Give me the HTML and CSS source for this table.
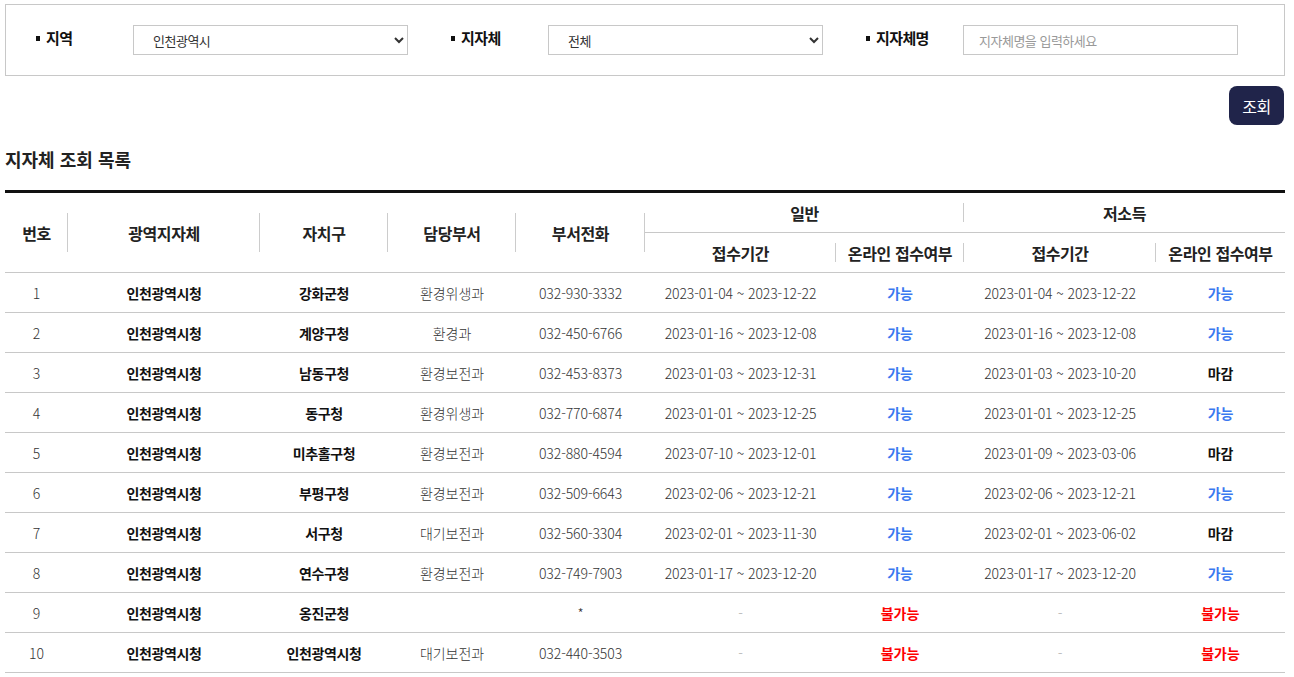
FILE: index.html
```html
<!DOCTYPE html>
<html lang="ko">
<head>
<meta charset="utf-8">
<title>지자체 조회 목록</title>
<link rel="stylesheet" href="styles.css">
</head>
<body>
<div class="wrap">
  <div class="search-box">
    <div class="field">
      <span class="label">지역</span>
      <select class="control"><option>인천광역시</option></select>
    </div>
    <div class="field">
      <span class="label">지자체</span>
      <select class="control"><option>전체</option></select>
    </div>
    <div class="field">
      <span class="label">지자체명</span>
      <input class="control" type="text" placeholder="지자체명을 입력하세요">
    </div>
  </div>
  <div class="btn-row"><button class="btn">조회</button></div>
  <h2 class="title">지자체 조회 목록</h2>
  <table class="list">
    <colgroup>
      <col style="width:63px"><col style="width:192px"><col style="width:128px"><col style="width:128px"><col style="width:129px">
      <col style="width:191px"><col style="width:128px"><col style="width:192px"><col style="width:129px">
    </colgroup>
    <thead>
      <tr>
        <th rowspan="2" class="tall">번호</th>
        <th rowspan="2" class="tall sep">광역지자체</th>
        <th rowspan="2" class="tall sep">자치구</th>
        <th rowspan="2" class="tall sep">담당부서</th>
        <th rowspan="2" class="tall sep sep-r">부서전화</th>
        <th colspan="2" class="group">일반</th>
        <th colspan="2" class="group sep">저소득</th>
      </tr>
      <tr>
        <th>접수기간</th>
        <th class="sep">온라인 접수여부</th>
        <th class="sep">접수기간</th>
        <th class="sep">온라인 접수여부</th>
      </tr>
    </thead>
    <tbody>
      <tr><td>1</td><td class="b">인천광역시청</td><td class="b">강화군청</td><td>환경위생과</td><td>032-930-3332</td><td>2023-01-04 ~ 2023-12-22</td><td class="ok">가능</td><td>2023-01-04 ~ 2023-12-22</td><td class="ok">가능</td></tr>
      <tr><td>2</td><td class="b">인천광역시청</td><td class="b">계양구청</td><td>환경과</td><td>032-450-6766</td><td>2023-01-16 ~ 2023-12-08</td><td class="ok">가능</td><td>2023-01-16 ~ 2023-12-08</td><td class="ok">가능</td></tr>
      <tr><td>3</td><td class="b">인천광역시청</td><td class="b">남동구청</td><td>환경보전과</td><td>032-453-8373</td><td>2023-01-03 ~ 2023-12-31</td><td class="ok">가능</td><td>2023-01-03 ~ 2023-10-20</td><td class="closed">마감</td></tr>
      <tr><td>4</td><td class="b">인천광역시청</td><td class="b">동구청</td><td>환경위생과</td><td>032-770-6874</td><td>2023-01-01 ~ 2023-12-25</td><td class="ok">가능</td><td>2023-01-01 ~ 2023-12-25</td><td class="ok">가능</td></tr>
      <tr><td>5</td><td class="b">인천광역시청</td><td class="b">미추홀구청</td><td>환경보전과</td><td>032-880-4594</td><td>2023-07-10 ~ 2023-12-01</td><td class="ok">가능</td><td>2023-01-09 ~ 2023-03-06</td><td class="closed">마감</td></tr>
      <tr><td>6</td><td class="b">인천광역시청</td><td class="b">부평구청</td><td>환경보전과</td><td>032-509-6643</td><td>2023-02-06 ~ 2023-12-21</td><td class="ok">가능</td><td>2023-02-06 ~ 2023-12-21</td><td class="ok">가능</td></tr>
      <tr><td>7</td><td class="b">인천광역시청</td><td class="b">서구청</td><td>대기보전과</td><td>032-560-3304</td><td>2023-02-01 ~ 2023-11-30</td><td class="ok">가능</td><td>2023-02-01 ~ 2023-06-02</td><td class="closed">마감</td></tr>
      <tr><td>8</td><td class="b">인천광역시청</td><td class="b">연수구청</td><td>환경보전과</td><td>032-749-7903</td><td>2023-01-17 ~ 2023-12-20</td><td class="ok">가능</td><td>2023-01-17 ~ 2023-12-20</td><td class="ok">가능</td></tr>
      <tr><td>9</td><td class="b">인천광역시청</td><td class="b">옹진군청</td><td></td><td>*</td><td class="dash">-</td><td class="no">불가능</td><td class="dash">-</td><td class="no">불가능</td></tr>
      <tr><td>10</td><td class="b">인천광역시청</td><td class="b">인천광역시청</td><td>대기보전과</td><td>032-440-3503</td><td class="dash">-</td><td class="no">불가능</td><td class="dash">-</td><td class="no">불가능</td></tr>
    </tbody>
  </table>
</div>
</body>
</html>
```

FILE: styles.css
```css
* { box-sizing: border-box; }
html, body { margin: 0; padding: 0; background: #fff; }
body {
  font-family: "Noto Sans CJK KR", "Noto Sans", sans-serif;
  color: #222;
}
.wrap {
  width: 1280px;
  margin: 4px 0 0 5px;
}
.search-box {
  border: 1px solid #c8c8c8;
  height: 72px;
  padding: 20px 0 0 30px;
  display: flex;
  gap: 43px;
}
.field {
  display: flex;
  align-items: flex-start;
}
.label {
  width: 97px;
  display: flex;
  align-items: center;
  gap: 6px;
  font-size: 15px;
  font-weight: 700;
  letter-spacing: -0.6px;
  line-height: 26px;
  color: #111;
}
.label::before {
  content: "";
  width: 4px;
  height: 5px;
  background: #111;
}
.control {
  width: 275px;
  height: 30px;
  border: 1px solid #c8c8c8;
  border-radius: 0;
  background: #fff;
  font-family: "Noto Sans CJK KR", sans-serif;
  font-size: 13px;
  letter-spacing: -0.5px;
  color: #333;
  padding: 0 10px 0 15px;
  outline: none;
}
.control::placeholder { color: #999; }
.btn-row {
  display: flex;
  justify-content: flex-end;
  margin-top: 10px;
  padding-right: 1px;
}
.btn {
  width: 55px;
  height: 39px;
  border: none;
  border-radius: 8px;
  background: #20244a;
  color: #fff;
  font-family: "Noto Sans CJK KR", sans-serif;
  font-size: 16px;
  letter-spacing: -0.5px;
  padding: 0;
}
.title {
  margin: 21px 0 18px;
  font-size: 18px;
  font-weight: 700;
  letter-spacing: 0;
  line-height: 26px;
  color: #222;
}
.list {
  width: 1280px;
  border-collapse: collapse;
  table-layout: fixed;
  border-top: 3px solid #111;
}
.list th {
  position: relative;
  height: 40px;
  font-size: 16px;
  font-weight: 700;
  letter-spacing: -0.4px;
  color: #222;
  text-align: center;
  padding: 0;
  border-bottom: 1px solid #c8c8c8;
}
.list th.group { height: 41px; }
.list th.tall { height: 81px; }
.list th.sep::before {
  content: "";
  position: absolute;
  left: -1px;
  top: 25%;
  height: 50%;
  width: 1px;
  background: #ccc;
}
.list th.sep-r::after {
  content: "";
  position: absolute;
  right: 0;
  top: 25%;
  height: 50%;
  width: 1px;
  background: #ccc;
}
.list td {
  height: 40px;
  padding: 0;
  text-align: center;
  font-size: 14px;
  font-weight: 300;
  color: #333;
  letter-spacing: -0.1px;
  border-bottom: 1px solid #c8c8c8;
}
.list td.b { font-weight: 700; color: #111; letter-spacing: -0.4px; }
.list td.ok { font-weight: 700; color: #3b78f0; }
.list td.closed { font-weight: 700; color: #111; }
.list td.no { font-weight: 700; color: #ff0000; }
.list td.dash { color: #aaa; }
```
